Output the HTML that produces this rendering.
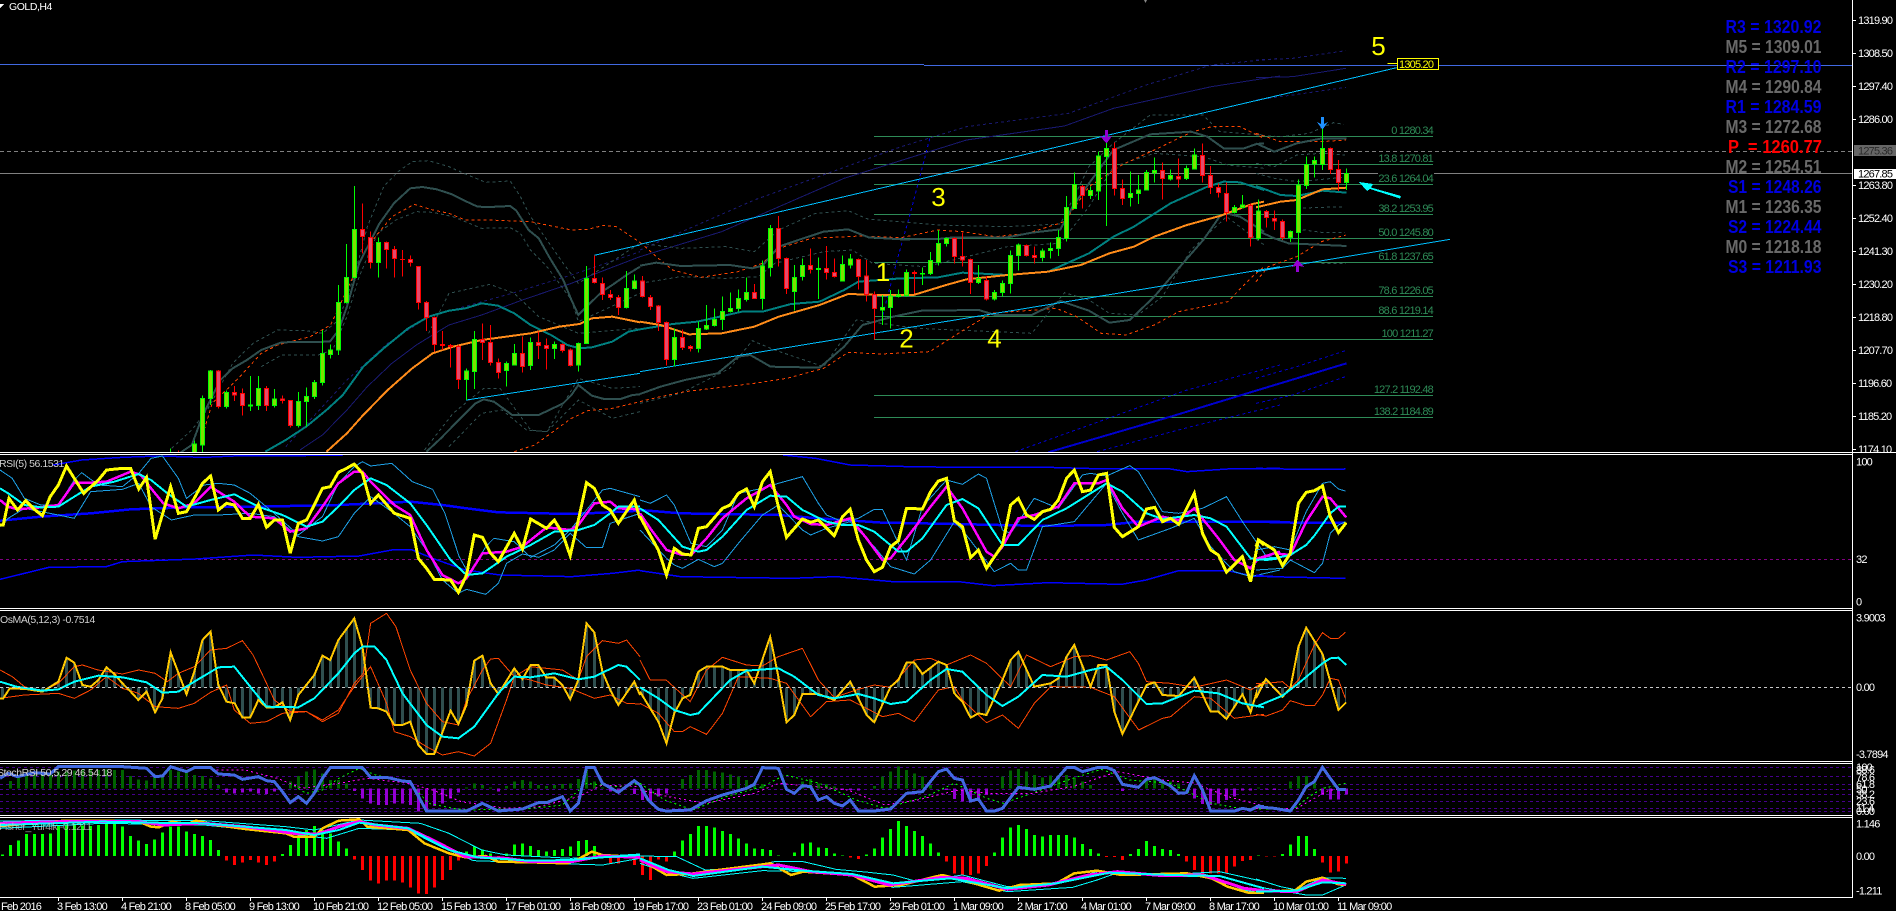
<!DOCTYPE html>
<html><head><meta charset="utf-8"><title>GOLD,H4</title>
<style>
html,body{margin:0;padding:0;background:#000;overflow:hidden}
svg{display:block;shape-rendering:crispEdges}
path,polyline{fill:none;vector-effect:non-scaling-stroke}
text{font-family:"Liberation Sans",sans-serif}
.ax{font-size:11px;letter-spacing:-.8px;fill:#fff}
.fb{font-size:11px;letter-spacing:-.8px;fill:#2e8b57;text-anchor:end}
.lb{font-size:10.5px;letter-spacing:-.45px;fill:#d0d0d0}
.num{font-size:26px;fill:#ff0;text-anchor:middle}
.pv{font-size:18px;font-weight:bold}
.gb{fill:#7ee000;stroke:#0f0;stroke-width:1}
.rb{fill:#e54a6c;stroke:#f00;stroke-width:1}
.gw{stroke:#0f0;stroke-width:1}
.rw{stroke:#f00;stroke-width:1}
.s{stroke:#2f4f4f;stroke-width:2}
.sd{stroke:#2f4f4f;stroke-width:1;stroke-dasharray:3 3}
.t{stroke:#008080;stroke-width:2}
.o{stroke:#ff8c1a;stroke-width:2}
.od{stroke:#ff4500;stroke-width:1;stroke-dasharray:3 3}
.m{stroke:#191970;stroke-width:1}
.md{stroke:#191970;stroke-width:1;stroke-dasharray:3 3}
.c{stroke:#00bfff;stroke-width:1}
.bb{stroke:#0000cd;stroke-width:2}
.bd{stroke:#0000cd;stroke-width:1;stroke-dasharray:3 3}
.y{stroke:#ff0;stroke-width:3}
.mg{stroke:#f0f;stroke-width:2.5}
.cy{stroke:#0ff;stroke-width:2}
.th{stroke:#1ea0e6;stroke-width:1}
.bl{stroke:#00f;stroke-width:2.5}
.bt{stroke:#00f;stroke-width:1.5}
.gd{stroke:#ffc800;stroke-width:2}
.or{stroke:#ff4500;stroke-width:1}
.hf{fill:url(#h);stroke:none}
.rb2{stroke:#4169e1;stroke-width:3}
.gs{stroke:#0f0;stroke-width:1;stroke-dasharray:2 3}
.ms{stroke:#f0f;stroke-width:1;stroke-dasharray:2 3}
.dg{stroke:#006400;stroke-width:3}
.pu{stroke:#9400d3;stroke-width:3}
.lg{stroke:#0f0;stroke-width:3}
.lr{stroke:#f00;stroke-width:3}
.cyt{stroke:#0ff;stroke-width:1}
.gd3{stroke:#ffc800;stroke-width:2.5}
.mg3{stroke:#f0f;stroke-width:3}
</style></head>
<body>
<svg xmlns="http://www.w3.org/2000/svg" width="1896" height="911" viewBox="0 0 1896 911">
<defs><pattern id="h" patternUnits="userSpaceOnUse" width="19.6" height="100"><rect x="2.45" width="7.35" height="100" fill="#2f4f4f"/></pattern></defs>
<rect width="1896" height="911" fill="#000"/>

<!-- horizontal lines -->
<g stroke-width="1">
<line x1="0" y1="64.5" x2="924" y2="64.5" stroke="#4169e1"/>
<line x1="924" y1="65.5" x2="1852" y2="65.5" stroke="#4169e1"/>
<line x1="0" y1="151.5" x2="1852" y2="151.5" stroke="#808080" stroke-dasharray="4 3"/>
<line x1="0" y1="173.5" x2="1378" y2="173.5" stroke="#808080"/>
<line x1="1434" y1="173.5" x2="1852" y2="173.5" stroke="#808080"/>
</g>
<g stroke="#2e8b57" stroke-width="1">
<line x1="874" y1="136.5" x2="1433" y2="136.5"/><line x1="874" y1="164.5" x2="1433" y2="164.5"/><line x1="874" y1="184.5" x2="1433" y2="184.5"/><line x1="874" y1="214.5" x2="1433" y2="214.5"/><line x1="874" y1="238.5" x2="1433" y2="238.5"/><line x1="874" y1="262.5" x2="1433" y2="262.5"/><line x1="874" y1="296.5" x2="1433" y2="296.5"/><line x1="874" y1="316.5" x2="1433" y2="316.5"/><line x1="874" y1="339.5" x2="1433" y2="339.5"/><line x1="874" y1="395.5" x2="1433" y2="395.5"/><line x1="874" y1="417.5" x2="1433" y2="417.5"/>
</g>

<!-- main overlays: zoom 1 -->
<g transform="scale(.40816 .33333)">
<polyline class="md" points="700,1340 850,1140 950,1030 1050,950 1260,878 1400,825 1568,755"/>
<polyline class="m" points="735,1350 790,1305 850,1230 900,1160 960,1090 1020,1035 1100,975 1180,945 1280,900 1400,850 1440,830 1568,770"/>
<polyline class="sd" points="420,1345 470,1290 510,1225 570,1090 620,1030 680,990 750,992 790,1000 830,960 870,820 900,680 940,560 975,515 1010,485 1050,482 1100,500 1140,522 1190,547 1250,543 1275,590 1300,650 1340,720 1380,790 1417,850 1568,730"/>
<polyline class="sd" points="640,1100 690,1065 780,1065 815,1050 850,950 880,830 925,700 970,660 1020,635 1060,637 1110,650 1180,685 1250,683 1275,700 1300,750 1340,800 1400,900 1417,965 1568,880"/>
<polyline class="sd" points="1050,1000 1100,880 1200,853 1260,880 1320,950 1417,1000 1568,985"/>
<polyline class="sd" points="1040,1350 1110,1240 1185,1165 1225,1165 1300,1290 1340,1295 1417,1135 1500,1165 1568,1160"/>
<polyline class="sd" points="1100,1340 1180,1240 1230,1230 1290,1290 1340,1295 1417,1200 1500,1255 1568,1235"/>
<polyline class="od" points="500,1290 520,1210 580,1140 640,1060 680,1035 760,1010 810,975 850,870 900,740 960,650 1015,613 1060,630 1100,640 1140,660 1200,660 1300,665 1400,690 1440,688 1480,676 1510,680 1568,727"/>
<polyline class="od" points="1260,1355 1310,1335 1400,1255 1440,1232 1500,1225 1568,1205"/>
<polyline class="s" points="443,1357 470,1335 497,1245 540,1140 570,1105 605,1080 640,1050 690,1027 808,1025 830,990 850,920 880,790 905,730 930,670 965,610 1005,565 1035,561 1070,568 1105,582 1140,603 1170,620 1200,621 1250,618 1265,632 1295,690 1320,715 1345,770 1380,840 1400,900 1417,945 1437,920 1475,875 1500,855 1535,825 1568,800"/>
<polyline class="s" points="1045,1355 1080,1315 1120,1265 1165,1210 1185,1198 1210,1205 1255,1245 1320,1245 1380,1210 1400,1185 1417,1155 1450,1187 1480,1197 1520,1197 1550,1185 1568,1183"/>
<polyline class="t" points="650,1355 700,1320 750,1280 800,1230 840,1185 890,1100 940,1045 1000,985 1050,950 1100,932 1140,925 1180,910 1220,917 1260,940 1300,975 1350,1005 1390,1035 1420,1045 1450,1042 1500,1025 1540,995 1568,988"/>
<polyline class="o" points="800,1355 850,1300 890,1245 950,1170 1010,1105 1060,1060 1110,1040 1180,1020 1300,1000 1370,980 1420,972 1450,955 1500,950 1540,960 1568,967"/>
<polyline class="c" points="1456,766 1568,735"/>
<polyline class="c" points="1143,1120 1143,1200 1568,1120"/>
</g>
<!-- main overlays: zoom 2 -->
<g transform="translate(640 0) scale(.40816 .33333)">
<polyline points="710,415 690,510 660,650 630,780 600,920 590,970" stroke="#0000e0" stroke-width="1" style="stroke-dasharray:3 3"/>
<polyline class="md" points="0,750 280,600 640,440 800,380 1050,340 1240,255 1400,195 1568,175"/>
<polyline class="m" points="0,770 200,695 500,535 800,420 1040,378 1160,325 1400,260 1568,228"/>
<polyline class="bd" points="920,1355 1340,1170 1568,1095"/>
<polyline class="bd" points="1120,1355 1350,1280 1568,1215"/>
<polyline class="bb" points="1000,1357 1300,1250 1568,1150"/>
<polyline class="sd" points="0,730 100,745 210,740 280,755 340,690 430,640 510,632 560,658 640,665 730,675 900,680 1030,672 1100,500 1160,430 1250,345 1380,345 1420,395 1529,405"/>
<polyline class="sd" points="0,1210 100,1180 220,1105 275,1022 330,1050 450,1100 530,960 680,985 960,1000 1040,878 1100,900 1150,940 1220,945 1280,890 1350,750 1437,650 1529,735"/>
<polyline class="sd" points="0,850 100,830 210,835 290,830 330,790 450,755 520,750 570,790 700,800 900,740 1030,730 1100,620 1160,500 1260,460 1380,470 1440,495 1529,505"/>
<polyline class="od" points="0,727 40,770 80,810 150,832 240,815 300,790 340,745 420,715 540,708 640,713 730,690 790,695 870,710 950,700 1040,665 1100,560 1180,495 1260,450 1350,397 1400,380 1470,380 1529,415"/>
<polyline class="od" points="0,1205 50,1190 110,1175 280,1150 360,1135 450,1105 510,1057 590,1062 710,1055 780,1000 860,940 1020,925 1070,950 1130,1000 1190,1005 1260,975 1320,935 1440,905 1500,830 1529,800"/>
<polyline class="s" points="0,797 40,788 100,798 220,795 275,805 300,797 340,740 400,715 450,695 510,688 560,712 640,718 730,717 770,712 900,712 960,698 1030,688 1060,620 1100,550 1160,450 1250,403 1350,395 1390,410 1430,445 1480,445 1510,432 1529,430"/>
<polyline class="s" points="0,1182 50,1160 110,1140 190,1120 240,1070 270,1065 320,1100 440,1103 500,1040 545,975 620,950 690,932 830,930 870,945 960,945 1030,903 1100,932 1150,968 1200,960 1260,890 1330,790 1380,720 1420,650 1437,640 1470,650 1529,695"/>
<polyline class="t" points="0,988 80,972 140,965 250,935 300,935 370,912 440,905 500,870 535,845 640,835 730,832 790,818 900,825 1000,815 1100,760 1160,710 1210,680 1300,610 1390,560 1430,545 1470,547 1529,570"/>
<polyline class="o" points="0,965 50,975 120,1003 200,1000 280,980 340,950 440,915 510,882 590,885 670,885 750,855 800,838 900,825 1000,815 1080,795 1150,760 1210,740 1260,710 1340,675 1420,648 1500,612 1529,605"/>
<polyline class="c" points="0,733 1568,285"/>
<polyline class="c" points="0,1115 1568,800"/>
</g>
<!-- main overlays: zoom 3 -->
<g transform="translate(1256 0) scale(.40816 .33333)">
<polyline class="md" points="0,180 90,175 220,152"/>
<polyline class="m" points="0,233 90,230 220,205"/>
<polyline class="md" points="0,300 90,285 220,262"/>
<polyline class="bd" points="0,1135 100,1100 219,1052"/>
<polyline class="bd" points="0,1210 90,1185 219,1130"/>
<polyline class="bb" points="0,1172 100,1135 222,1090"/>
<polyline class="sd" points="0,405 60,410 130,400 190,368 215,373"/>
<polyline class="sd" points="0,490 45,500 100,465 160,460 218,465"/>
<polyline class="sd" points="0,520 45,535 100,545 215,532"/>
<polyline class="sd" points="100,625 160,622 218,620"/>
<polyline class="sd" points="100,687 160,697 218,697"/>
<polyline class="sd" points="160,790 220,790"/>
<polyline class="od" points="0,400 60,425 160,425 220,420"/>
<polyline class="od" points="0,845 30,800 100,770 160,725 220,705"/>
<polyline class="s" points="0,430 45,455 100,430 162,415 222,415"/>
<polyline class="s" points="0,690 45,715 80,730 222,738"/>
<polyline class="t" points="0,558 60,585 100,588 163,572 222,578"/>
<polyline class="o" points="0,622 60,605 100,600 163,568 222,563"/>
<polyline class="c" points="0,302 345,203"/>
<polyline class="c" points="0,815 475,718"/>
<polyline points="322,190 346,190" stroke="#ff0" stroke-width="1"/>
</g>

<!-- candles -->
<g transform="translate(2.5 0) scale(8 .33333)">
<path class="gw" d="M21 1345V1357M24 1322V1357M25 1186V1357M26 1110V1215M28 1172V1225M31 1128V1233M32 1128V1230M34 1167V1223M37 1176V1283M38 1162V1280M39 1140V1197M40 990V1157M41 1033V1076M42 855V1065M43 732V910M44 558V835M47 712V833M58 1105V1200M59 993V1167M63 1085V1160M64 1032V1097M66 1012V1110M69 1025V1077M72 1027V1115M73 798V1030M78 813V925M79 823V868M84 985V1100M87 965V1058M88 915V990M89 925V980M90 890V990M91 877V937M92 868V935M93 832V905M95 782V928M96 675V830M99 795V932M100 775V842M102 772V897M105 767V845M106 762V805M110 885V975M111 870V985M112 868V893M113 808V890M115 802V855M116 756V825M117 690V797M118 712V740M122 795V852M124 870V902M125 842V890M126 752V880M127 730V812M130 745V785M131 727V775M132 690V768M133 588V725M134 517V627M136 560V597M137 455V600M138 420V678M141 515V620M142 525V612M143 510V572M144 472V548M146 508V542M148 497V540M149 445V508M154 615V640M155 585V625M157 598V720M161 692V726M162 538V790M163 470V567M164 470V533M165 385V510M168 505V570"/>
<path class="rw" d="M22 1352V1357M27 1110V1225M29 1158V1203M30 1165V1247M33 1158V1233M35 1186V1210M36 1200V1283M45 610V760M46 694V806M48 725V806M49 738V833M50 750V830M51 766V800M52 798V928M53 903V993M54 950V1055M55 993V1050M56 1032V1103M57 1035V1167M60 970V1080M61 975V1097M62 1075V1136M65 1010V1118M67 995V1077M68 1015V1108M70 1030V1058M71 1045V1100M74 766V850M75 832V900M76 870V900M77 885V945M80 828V893M81 885V930M82 915V993M83 965V1097M85 988V1050M86 1035V1055M94 852V897M97 648V800M98 772V882M101 745V820M103 738V838M104 775V832M107 775V868M108 780V905M109 875V1018M114 812V880M119 712V790M120 697V800M121 775V882M123 828V902M128 733V770M129 740V790M135 555V625M139 428V587M140 538V615M145 488V598M147 475V562M150 430V548M151 498V582M152 550V592M153 548V665M156 610V740M158 630V682M159 632V690M160 658V720M166 442V522M167 480V573"/>
<path class="gb" d="M23.75 1332h.5V1357h-.5zM24.75 1195h.5V1335h-.5zM25.75 1113h.5V1195h-.5zM27.75 1177h.5V1220h-.5zM30.75 1215h.5V1218h-.5zM31.75 1165h.5V1217h-.5zM33.75 1197h.5V1217h-.5zM36.75 1204h.5V1277h-.5zM37.75 1190h.5V1205h-.5zM38.75 1147h.5V1190h-.5zM39.75 1060h.5V1148h-.5zM40.75 1050h.5V1063h-.5zM41.75 907h.5V1050h-.5zM42.75 832h.5V907h-.5zM43.75 688h.5V832h-.5zM46.75 727h.5V787h-.5zM57.75 1113h.5V1138h-.5zM58.75 1018h.5V1115h-.5zM62.75 1090h.5V1112h-.5zM63.75 1060h.5V1095h-.5zM65.75 1027h.5V1097h-.5zM68.75 1033h.5V1045h-.5zM71.75 1030h.5V1095h-.5zM72.75 835h.5V1030h-.5zM77.75 865h.5V923h-.5zM78.75 843h.5V866h-.5zM83.75 1012h.5V1078h-.5zM86.75 985h.5V1045h-.5zM87.75 977h.5V987h-.5zM88.75 958h.5V977h-.5zM89.75 935h.5V958h-.5zM90.75 925h.5V935h-.5zM91.75 895h.5V925h-.5zM92.75 877h.5V898h-.5zM94.75 798h.5V895h-.5zM95.75 685h.5V802h-.5zM98.75 832h.5V875h-.5zM99.75 796h.5V830h-.5zM101.75 805h.5V808h-.5zM104.75 793h.5V843h-.5zM105.75 777h.5V795h-.5zM109.75 922h.5V930h-.5zM110.75 888h.5V922h-.5zM111.75 885h.5V890h-.5zM112.75 817h.5V887h-.5zM114.75 820h.5V822h-.5zM115.75 781h.5V820h-.5zM116.75 730h.5V787h-.5zM117.75 715h.5V730h-.5zM121.75 835h.5V848h-.5zM123.75 877h.5V897h-.5zM124.75 850h.5V877h-.5zM125.75 766h.5V851h-.5zM126.75 735h.5V767h-.5zM129.75 753h.5V773h-.5zM130.75 745h.5V752h-.5zM131.75 713h.5V745h-.5zM132.75 622h.5V715h-.5zM133.75 553h.5V625h-.5zM135.75 571h.5V587h-.5zM136.75 468h.5V573h-.5zM137.75 445h.5V470h-.5zM140.75 580h.5V593h-.5zM141.75 570h.5V580h-.5zM142.75 517h.5V570h-.5zM143.75 511h.5V519h-.5zM145.75 526h.5V537h-.5zM147.75 505h.5V535h-.5zM148.75 465h.5V507h-.5zM153.75 622h.5V638h-.5zM154.75 615h.5V623h-.5zM156.75 633h.5V715h-.5zM160.75 695h.5V713h-.5zM161.75 555h.5V697h-.5zM162.75 493h.5V557h-.5zM163.75 481h.5V492h-.5zM164.75 445h.5V493h-.5zM167.75 520h.5V548h-.5z"/>
<path class="rb" d="M26.75 1113h.5V1220h-.5zM28.75 1177h.5V1185h-.5zM29.75 1180h.5V1217h-.5zM32.75 1165h.5V1217h-.5zM34.75 1197h.5V1201h-.5zM35.75 1201h.5V1277h-.5zM44.75 688h.5V710h-.5zM45.75 712h.5V787h-.5zM47.75 727h.5V748h-.5zM48.75 748h.5V775h-.5zM49.75 778h.5V779h-.5zM50.75 778h.5V787h-.5zM51.75 800h.5V907h-.5zM52.75 907h.5V952h-.5zM53.75 952h.5V1033h-.5zM54.75 1033h.5V1037h-.5zM55.75 1037h.5V1040h-.5zM56.75 1040h.5V1138h-.5zM59.75 1018h.5V1027h-.5zM60.75 1027h.5V1087h-.5zM61.75 1087h.5V1117h-.5zM64.75 1060h.5V1100h-.5zM66.75 1027h.5V1037h-.5zM67.75 1037h.5V1045h-.5zM69.75 1033h.5V1052h-.5zM70.75 1050h.5V1097h-.5zM73.75 835h.5V848h-.5zM74.75 851h.5V883h-.5zM75.75 883h.5V893h-.5zM76.75 892h.5V922h-.5zM79.75 843h.5V890h-.5zM80.75 892h.5V920h-.5zM81.75 918h.5V968h-.5zM82.75 968h.5V1078h-.5zM84.75 1012h.5V1042h-.5zM85.75 1040h.5V1046h-.5zM93.75 877h.5V895h-.5zM96.75 685h.5V775h-.5zM97.75 775h.5V865h-.5zM100.75 796h.5V808h-.5zM102.75 805h.5V817h-.5zM103.75 817h.5V830h-.5zM106.75 778h.5V830h-.5zM107.75 828h.5V883h-.5zM108.75 883h.5V925h-.5zM113.75 817h.5V820h-.5zM118.75 715h.5V770h-.5zM119.75 770h.5V780h-.5zM120.75 778h.5V848h-.5zM122.75 841h.5V897h-.5zM127.75 737h.5V767h-.5zM128.75 767h.5V773h-.5zM134.75 560h.5V587h-.5zM138.75 445h.5V565h-.5zM139.75 565h.5V595h-.5zM144.75 512h.5V535h-.5zM146.75 530h.5V537h-.5zM149.75 466h.5V526h-.5zM150.75 526h.5V562h-.5zM151.75 562h.5V578h-.5zM152.75 580h.5V637h-.5zM155.75 617h.5V712h-.5zM157.75 635h.5V652h-.5zM158.75 655h.5V663h-.5zM159.75 665h.5V712h-.5zM165.75 445h.5V508h-.5zM166.75 508h.5V547h-.5z"/>
</g>

<!-- arrows -->
<polygon points="1321,117 1324,117 1324,124 1328,122 1323,129 1322,129 1317,122 1321,124" fill="#1e90ff"/>
<polygon points="1105,130 1108,130 1108,137 1112,136 1107,143 1106,143 1100,136 1105,137" fill="#9400d3"/>
<polygon points="1296,272 1299,272 1299,266 1304,267 1298,260 1297,260 1292,267 1296,266" fill="#9400d3"/>
<polygon points="1359,182 1373,184 1371,187.5 1401,196 1400,198.5 1370,189 1367,191" fill="#0ff"/>
<polygon points="1144,0 1147,0 1145.5,3" fill="#888"/>

<!-- RSI panel -->
<line x1="0" y1="559.5" x2="1852" y2="559.5" stroke="#800080" stroke-dasharray="3 3"/>
<g transform="translate(0 450) scale(.40816 .33333)">
<polyline class="bt" points="130,45 200,30 300,22 390,18 500,22 590,17 720,17 840,15"/>
<polyline class="bt" points="0,388 60,370 120,352 260,350 300,335 480,327 620,315 730,322 880,318 960,300 1010,300 1060,325 1140,360 1225,375 1400,380 1500,370 1568,360"/>
<polyline class="bl" points="0,212 100,200 222,190 320,178 457,172 633,170 829,165 1005,155 1084,165 1143,175 1221,187 1397,192 1476,188 1568,182"/>
<polyline class="th" points="0,60 30,85 60,145 100,165 143,165 182,90 200,68 241,105 300,110 340,70 370,25 398,18 437,85 457,145 500,105 535,100 574,105 613,130 672,190 731,255 790,200 829,100 868,50 888,35 908,48 960,40 1010,95 1060,118 1090,190 1125,320 1150,375 1190,290 1210,265 1260,275 1300,322 1358,285 1397,240 1437,180 1476,120 1495,115 1568,140"/>
<polyline class="th" points="0,230 20,205 60,175 143,195 182,205 222,125 300,118 340,100 370,170 420,210 476,195 535,195 613,190 672,200 731,260 790,273 829,260 868,190 908,140 960,185 1005,230 1050,310 1084,390 1123,430 1143,418 1190,433 1221,400 1241,340 1280,312 1320,322 1358,300 1397,250 1437,293 1476,293 1495,220 1568,190"/>
<polyline class="mg" points="0,150 20,170 43,178 100,172 143,165 182,98 222,98 261,95 320,65 345,75 370,115 400,160 437,175 476,160 516,110 535,125 574,155 613,200 672,205 711,245 751,235 790,170 829,100 868,65 888,65 908,95 966,165 1005,195 1045,300 1084,375 1123,400 1143,385 1182,310 1241,305 1280,290 1339,232 1397,240 1417,225 1456,160 1495,155 1515,175 1568,178"/>
<polyline class="cy" points="0,115 20,130 60,165 100,172 143,170 182,140 222,110 280,95 340,72 370,90 410,130 457,170 516,150 574,133 633,170 692,195 751,230 790,215 829,170 868,120 908,85 947,105 1005,160 1045,225 1104,330 1143,375 1182,370 1241,320 1300,285 1358,245 1417,240 1456,225 1495,190 1515,170 1568,170"/>
<polyline class="y" points="0,225 8,225 22,145 43,180 63,152 84,178 104,197 123,140 143,105 163,48 182,85 205,130 241,90 261,60 300,55 320,55 340,117 359,82 380,268 418,110 437,190 457,185 476,145 496,100 516,78 535,180 555,160 574,165 594,205 613,205 633,163 653,232 672,210 692,210 711,310 731,220 751,210 770,165 790,115 809,110 829,67 849,55 868,42 888,70 908,160 927,135 966,190 1005,205 1025,325 1045,355 1064,388 1104,390 1123,427 1143,375 1162,255 1182,262 1202,310 1221,335 1260,250 1280,297 1300,207 1339,235 1358,210 1378,250 1397,317 1417,210 1437,98 1456,115 1476,165 1495,180 1515,220 1554,150 1568,205"/>
</g>
<g transform="translate(640 450) scale(.40816 .33333)">
<polyline class="bt" points="350,15 430,25 515,45 660,50 790,52 1000,52 1143,57 1300,57 1340,65 1440,57 1568,55"/>
<polyline class="bt" points="0,362 100,380 370,385 480,380 620,395 780,395 865,407 1000,398 1180,403 1240,390 1320,362 1440,362 1500,378 1568,380"/>
<polyline class="bl" points="0,180 100,190 339,195 437,205 594,218 770,222 986,228 1143,225 1221,215 1568,215"/>
<polyline class="th" points="0,150 25,160 65,135 84,165 125,280 163,290 202,240 241,130 300,115 339,100 398,80 437,160 457,195 496,215 535,205 574,178 594,178 633,280 653,330 692,170 751,90 790,103 829,72 849,85 888,240 908,250 966,145 1025,175 1084,75 1104,70 1143,78 1200,47 1221,65 1280,185 1320,190 1378,175 1437,140 1476,215 1535,320 1568,325"/>
<polyline class="th" points="0,240 65,325 84,345 104,355 143,328 182,350 202,340 241,280 300,195 339,165 398,240 418,255 457,235 515,215 574,290 614,350 672,372 712,330 770,215 790,240 868,365 908,340 927,360 947,360 986,230 1064,215 1143,100 1182,190 1221,270 1300,235 1358,205 1398,290 1456,365 1496,380 1568,360"/>
<polyline class="mg" points="0,190 25,235 65,300 104,315 125,315 163,265 202,205 261,145 319,105 359,165 378,200 418,222 457,225 515,205 555,265 594,330 614,325 653,265 712,170 751,110 790,175 849,305 868,320 888,290 927,205 966,195 1025,170 1064,100 1123,100 1143,90 1182,175 1221,230 1280,200 1320,210 1358,175 1417,265 1456,330 1496,355 1515,325 1568,305"/>
<polyline class="cy" points="0,175 45,210 104,290 143,305 163,300 202,260 261,180 319,137 359,140 398,180 457,215 496,225 535,225 574,245 633,305 653,305 692,265 751,165 790,147 829,175 888,285 927,285 986,210 1045,175 1104,130 1143,100 1182,125 1241,190 1280,207 1358,195 1398,205 1437,230 1496,325 1535,330 1568,325"/>
<polyline class="y" points="0,200 45,300 65,375 84,295 104,312 125,315 143,235 163,230 202,175 221,165 241,130 261,117 280,170 300,95 319,65 339,170 359,262 398,207 418,217 437,210 476,257 496,200 515,178 535,270 555,330 574,365 594,352 614,290 633,272 653,175 692,177 712,125 731,93 751,85 770,212 790,230 810,323 829,300 849,355 888,285 908,165 927,145 947,195 966,208 986,185 1006,178 1025,150 1045,85 1064,60 1084,125 1104,120 1123,75 1143,70 1162,232 1182,260 1221,230 1241,177 1261,172 1280,215 1300,205 1320,223 1358,130 1378,250 1398,300 1417,315 1437,367 1476,320 1496,395 1515,270 1529,285"/>
</g>
<g transform="translate(1256 450) scale(.40816 .33333)">
<polyline class="bt" points="0,55 100,58 219,57"/>
<polyline class="bt" points="0,375 30,380 219,385"/>
<polyline class="bl" points="0,215 100,218 219,218"/>
<polyline class="th" points="0,300 45,290 84,300 123,185 163,100 182,95 202,117 219,123"/>
<polyline class="th" points="0,360 65,355 84,330 143,368 163,340 182,250 202,225 219,215"/>
<polyline class="mg" points="0,330 45,310 84,315 123,215 163,140 182,145 221,202"/>
<polyline class="cy" points="0,330 45,325 84,315 123,285 143,257 182,190 202,170 221,170"/>
<polyline class="y" points="0,290 6,270 45,300 65,347 84,310 104,160 123,127 143,122 163,108 182,200 202,248 221,218"/>
</g>

<!-- OsMA panel -->
<g transform="translate(0 450) scale(.40816 .33333)">
<path class="hf" d="M0 712L0 745 8 745 24 715 64 717 104 725 143 695 163 623 182 638 202 705 222 710 241 690 261 652 280 672 300 700 320 725 339 750 359 725 380 787 398 745 418 607 457 733 476 665 496 570 516 545 535 705 555 755 575 760 594 803 613 803 633 750 653 772 672 772 692 757 711 810 731 735 770 675 790 617 809 630 829 570 868 505 888 590 908 773 927 775 947 785 966 825 986 825 1005 815 1025 885 1045 912 1064 912 1104 782 1123 822 1143 765 1162 632 1182 617 1202 700 1221 732 1260 655 1280 687 1300 645 1319 645 1339 683 1358 683 1378 705 1397 748 1417 690 1437 520 1456 547 1476 665 1495 720 1515 765 1554 695 1568 735 1568 712Z"/>
<polyline class="or" points="0,660 30,680 60,710 100,725 143,700 182,650 202,645 240,660 300,672 340,660 380,670 410,695 437,670 476,650 516,600 555,595 594,572 620,615 653,700 672,750 711,785 751,785 790,815 829,790 868,700 890,670 908,520 947,490 970,530 1005,660 1045,760 1084,815 1123,825 1143,750 1182,660 1202,627 1221,625 1260,680 1300,650 1339,655 1378,660 1417,690 1437,620 1476,572 1515,580 1535,570 1568,620"/>
<polyline class="or" points="0,745 60,735 143,730 182,745 222,720 261,680 300,715 339,730 380,770 437,775 476,760 516,727 555,705 574,780 613,820 653,815 692,790 751,785 790,810 829,780 868,710 908,650 947,760 966,845 1005,860 1045,890 1084,915 1123,905 1162,918 1202,880 1241,750 1260,680 1300,690 1339,705 1397,715 1456,745 1495,735 1535,760 1568,762"/>
<polyline class="gd" points="0,745 8,745 24,715 64,717 104,725 143,695 163,623 182,638 202,705 222,710 241,690 261,652 280,672 300,700 320,725 339,750 359,725 380,787 398,745 418,607 457,733 476,665 496,570 516,545 535,705 555,755 575,760 594,803 613,803 633,750 653,772 672,772 692,757 711,810 731,735 770,675 790,617 809,630 829,570 868,505 888,590 908,773 927,775 947,785 966,825 986,825 1005,815 1025,885 1045,912 1064,912 1104,782 1123,822 1143,765 1162,632 1182,617 1202,700 1221,732 1260,655 1280,687 1300,645 1319,645 1339,683 1358,683 1378,705 1397,748 1417,690 1437,520 1456,547 1476,665 1495,720 1515,765 1554,695 1568,735"/>
<polyline class="cy" points="0,695 40,710 104,722 143,718 182,695 241,677 300,682 359,697 398,728 437,725 476,695 535,652 574,650 613,710 653,770 731,772 770,745 829,670 868,610 888,590 918,590 947,630 986,730 1045,825 1084,860 1123,865 1162,830 1221,730 1260,680 1300,682 1358,670 1417,688 1456,680 1515,645 1535,650 1568,690"/>
</g>
<g transform="translate(640 450) scale(.40816 .33333)">
<path class="hf" d="M0 712L0 725 45 815 65 880 84 790 104 745 123 735 143 665 163 650 202 650 221 660 261 660 280 700 319 560 339 680 359 817 378 795 398 732 437 732 476 750 515 695 555 795 574 817 614 710 633 690 653 638 672 638 692 672 731 635 751 645 770 730 790 755 810 803 829 790 849 795 888 690 908 630 927 605 966 710 1006 700 1025 685 1045 620 1064 585 1104 710 1123 645 1143 645 1162 785 1182 852 1241 705 1261 697 1280 735 1320 738 1358 683 1398 785 1417 785 1437 807 1476 733 1496 787 1515 710 1529 695 1529 712Z"/>
<polyline class="or" points="0,630 25,690 64,690 123,755 163,660 202,622 261,645 300,648 339,620 398,595 437,690 476,742 535,718 574,705 614,712 672,630 712,625 751,645 810,615 849,640 908,710 947,615 1006,650 1064,620 1104,617 1143,630 1200,605 1221,640 1241,695 1300,700 1358,712 1437,690 1496,720 1529,695"/>
<polyline class="or" points="0,760 45,790 84,845 104,845 123,830 163,853 202,790 241,680 319,685 359,700 418,800 457,755 515,750 555,775 594,800 633,790 672,815 731,720 770,710 790,750 849,818 888,795 927,835 966,760 1006,710 1104,712 1162,740 1222,840 1280,805 1300,800 1358,740 1398,745 1456,805 1529,793"/>
<polyline class="gd" points="0,725 45,815 65,880 84,790 104,745 123,735 143,665 163,650 202,650 221,660 261,660 280,700 319,560 339,680 359,817 378,795 398,732 437,732 476,750 515,695 555,795 574,817 614,710 633,690 653,638 672,638 692,672 731,635 751,645 770,730 790,755 810,803 829,790 849,795 888,690 908,630 927,605 966,710 1006,700 1025,685 1045,620 1064,585 1104,710 1123,645 1143,645 1162,785 1182,852 1241,705 1261,697 1280,735 1320,738 1358,683 1398,785 1417,785 1437,807 1476,733 1496,787 1515,710 1529,695"/>
<polyline class="cy" points="0,712 45,745 84,780 123,795 143,790 182,740 221,690 261,662 339,655 378,680 437,735 476,745 535,732 574,745 614,762 653,755 712,690 751,657 790,665 849,735 888,768 927,740 986,675 1045,680 1104,660 1143,650 1182,690 1241,762 1280,760 1358,722 1417,730 1476,760 1529,772"/>
</g>
<g transform="translate(1256 450) scale(.40816 .33333)">
<path class="hf" d="M0 712L0 745 24 687 65 740 84 715 104 590 123 533 163 612 202 780 221 757 221 712Z"/>
<polyline class="or" points="0,700 25,700 65,695 84,715 104,690 143,585 163,548 182,565 202,565 219,547"/>
<polyline class="or" points="0,793 25,798 65,780 84,752 123,767 143,767 163,735 182,685 202,690 219,745"/>
<polyline class="gd" points="0,745 24,687 65,740 84,715 104,590 123,533 163,612 202,780 221,757"/>
<polyline class="cy" points="0,770 65,737 104,700 163,640 182,625 202,623 221,645"/>
</g>
<line x1="0" y1="687.5" x2="1852" y2="687.5" stroke="#c8c8c8" stroke-dasharray="3 3"/>

<!-- Stoch panel -->
<g stroke="#46008c" stroke-dasharray="3 3">
<line x1="0" y1="767.5" x2="1852" y2="767.5"/><line x1="0" y1="776.5" x2="1852" y2="776.5"/><line x1="0" y1="784.5" x2="1852" y2="784.5"/><line x1="0" y1="789.5" x2="1852" y2="789.5"/><line x1="0" y1="794.5" x2="1852" y2="794.5"/><line x1="0" y1="801.5" x2="1852" y2="801.5"/><line x1="0" y1="808.5" x2="1852" y2="808.5"/><line x1="0" y1="811.5" x2="1852" y2="811.5"/>
</g>
<g transform="translate(2.5 450) scale(8 .33333)">
<path class="dg" d="M1 1015V993M2 1015V980M3 1015V978M4 1015V975M5 1015V975M6 1015V975M7 1015V965M8 1015V965M9 1015V962M10 1015V960M11 1015V958M12 1015V960M13 1015V958M14 1015V960M15 1015V960M16 1015V978M17 1015V988M18 1015V992M19 1015V975M20 1015V978M21 1015V960M22 1015V965M23 1015V965M24 1015V975M25 1015V978M26 1015V985M27 1015V1005M36 1015V995M37 1015V978M38 1015V965M39 1015V958M40 1015V970M41 1015V990M42 1015V990M43 1015V1000M58 1015V1012M59 1015V1000M60 1015V1005M61 1015V1012M63 1015V1008M64 1015V995M65 1015V990M66 1015V995M67 1015V1005M68 1015V1008M69 1015V1005M70 1015V1002M71 1015V1000M72 1015V987M73 1015V960M74 1015V995M75 1015V1012M85 1015V987M86 1015V975M87 1015V960M88 1015V960M89 1015V965M90 1015V968M91 1015V973M92 1015V980M93 1015V990M94 1015V998M95 1015V1002M100 1015V995M101 1015V987M102 1015V1000M103 1015V1002M104 1015V1010M109 1015V1008M110 1015V980M111 1015V965M112 1015V950M113 1015V960M114 1015V970M115 1015V980M116 1015V1005M125 1015V980M126 1015V962M127 1015V957M128 1015V965M129 1015V975M130 1015V982M131 1015V977M132 1015V975M133 1015V975M134 1015V982M135 1015V995M136 1015V1005M143 1015V990M144 1015V985M145 1015V990M146 1015V995M147 1015V1000M157 1015V1013M161 1015V995M162 1015V978M163 1015V978M164 1015V997"/>
<path class="pu" d="M28 1015V1027M29 1015V1030M30 1015V1028M31 1015V1025M32 1015V1030M33 1015V1032M34 1015V1025M44 1015V1023M45 1015V1045M46 1015V1060M47 1015V1065M48 1015V1065M49 1015V1060M50 1015V1060M51 1015V1065M52 1015V1085M53 1015V1085M54 1015V1068M55 1015V1060M56 1015V1045M57 1015V1027M62 1015V1025M76 1015V1025M77 1015V1030M79 1015V1032M80 1015V1050M81 1015V1058M82 1015V1040M83 1015V1030M105 1015V1020M106 1015V1020M107 1015V1022M118 1015V1020M119 1015V1047M120 1015V1055M121 1015V1058M122 1015V1045M123 1015V1035M140 1015V1023M149 1015V1045M150 1015V1062M151 1015V1065M152 1015V1060M153 1015V1050M154 1015V1040M155 1015V1022M156 1015V1022M158 1015V1018M159 1015V1020M165 1015V1035M166 1015V1048M167 1015V1048M168 1015V1033"/>
</g>
<g transform="translate(0 450) scale(.40816 .33333)">
<polyline class="gs" points="710,1000 750,1030 790,1020 830,985 880,955 920,975 1000,995 1020,1020 1050,1060 1110,1075 1150,1080 1300,1075 1378,1065 1437,1000 1515,1010 1568,1000"/>
<polyline class="ms" points="530,960 600,960 680,985 740,1015 830,1000 900,985 1000,1000 1060,1020 1130,1055 1240,1075 1320,1070 1417,1040 1476,1005 1568,1010"/>
<polyline class="rb2" points="0,985 20,970 43,980 84,968 123,972 143,950 300,950 359,955 380,980 398,978 418,950 457,965 476,953 516,953 535,972 574,975 594,988 633,980 653,992 672,995 692,1025 711,1058 731,1040 751,1060 770,1030 790,985 809,953 888,953 908,982 947,982 986,993 1005,995 1045,1083 1143,1083 1182,1060 1221,1083 1280,1077 1319,1058 1339,1058 1378,1040 1397,1083 1417,1060 1437,952 1456,952 1476,1000 1515,1027 1554,992 1568,1005"/>
</g>
<g transform="translate(640 450) scale(.40816 .33333)">
<polyline class="gs" points="0,1000 60,1050 130,1080 210,1040 300,1010 355,975 440,1000 530,1050 600,1075 700,1040 770,1000 850,1045 890,1060 960,1030 1060,985 1130,958 1200,990 1300,1000 1400,1060 1470,1075 1529,1078"/>
<polyline class="ms" points="0,1020 70,1040 160,1060 280,1030 340,1000 430,1010 510,1020 600,1065 680,1050 780,1020 860,1030 960,1030 1060,1010 1170,965 1280,990 1360,1000 1440,1040 1529,1068"/>
<polyline class="rb2" points="0,1005 20,1050 45,1078 64,1083 123,1080 163,1052 202,1035 261,1015 280,1003 300,953 339,955 359,1018 378,1030 398,1007 418,1010 437,1050 457,1040 476,1060 496,1068 515,1050 535,1083 574,1083 614,1077 653,1030 692,1025 731,965 751,957 770,985 790,990 810,1053 829,1047 849,1083 868,1083 888,1075 927,1012 966,1018 1006,1008 1045,953 1064,952 1084,965 1123,952 1143,952 1162,962 1182,1003 1221,1012 1241,988 1261,983 1300,1008 1320,1030 1339,1028 1358,977 1378,1020 1398,1083 1456,1083 1476,1075 1496,1080 1515,1068 1529,1070"/>
</g>
<g transform="translate(1256 450) scale(.40816 .33333)">
<polyline class="gs" points="0,1075 90,1080 130,1040 163,1015 220,1000"/>
<polyline class="ms" points="0,1075 100,1075 150,1040 180,1020 220,1018"/>
<polyline class="rb2" points="0,1070 45,1075 84,1083 104,1050 123,1010 143,995 163,952 182,985 202,1018 221,1018"/>
</g>

<!-- Last panel -->
<g transform="translate(2.5 450) scale(8 .33333)">
<path class="lg" d="M0 1218V1213M1 1218V1185M2 1218V1172M3 1218V1152M4 1218V1152M5 1218V1152M6 1218V1150M7 1218V1128M8 1218V1125M9 1218V1125M10 1218V1127M11 1218V1128M12 1218V1125M13 1218V1120M14 1218V1118M15 1218V1130M16 1218V1158M17 1218V1172M18 1218V1182M19 1218V1168M20 1218V1148M21 1218V1130M22 1218V1130M23 1218V1145M24 1218V1152M25 1218V1158M26 1218V1170M27 1218V1200M35 1218V1212M36 1218V1185M37 1218V1160M38 1218V1140M39 1218V1128M40 1218V1140M41 1218V1150M42 1218V1175M43 1218V1195M58 1218V1205M59 1218V1190M60 1218V1198M61 1218V1210M63 1218V1210M64 1218V1183M65 1218V1180M66 1218V1188M67 1218V1200M68 1218V1205M69 1218V1200M70 1218V1197M71 1218V1190M72 1218V1173M73 1218V1170M74 1218V1188M75 1218V1212M84 1218V1205M85 1218V1172M86 1218V1152M87 1218V1128M88 1218V1128M89 1218V1133M90 1218V1143M91 1218V1152M92 1218V1165M93 1218V1180M94 1218V1195M95 1218V1197M96 1218V1200M97 1218V1216M99 1218V1207M100 1218V1180M101 1218V1177M102 1218V1192M103 1218V1194M104 1218V1210M105 1218V1216M108 1218V1213M109 1218V1195M110 1218V1162M111 1218V1137M112 1218V1113M113 1218V1128M114 1218V1143M115 1218V1158M116 1218V1180M117 1218V1207M124 1218V1207M125 1218V1163M126 1218V1132M127 1218V1125M128 1218V1137M129 1218V1155M130 1218V1160M131 1218V1155M132 1218V1155M133 1218V1155M134 1218V1162M135 1218V1182M136 1218V1197M137 1218V1210M141 1218V1212M142 1218V1197M143 1218V1173M144 1218V1188M145 1218V1197M146 1218V1200M147 1218V1212M157 1218V1216M160 1218V1212M161 1218V1183M162 1218V1158M163 1218V1158M164 1218V1197"/>
<path class="lr" d="M28 1218V1232M29 1218V1245M30 1218V1238M31 1218V1230M32 1218V1238M33 1218V1245M34 1218V1235M44 1218V1228M45 1218V1260M46 1218V1292M47 1218V1300M48 1218V1292M49 1218V1292M50 1218V1297M51 1218V1312M52 1218V1330M53 1218V1332M54 1218V1312M55 1218V1290M56 1218V1260M57 1218V1232M62 1218V1222M76 1218V1240M77 1218V1240M78 1218V1220M79 1218V1245M80 1218V1275M81 1218V1290M82 1218V1228M83 1218V1235M106 1218V1222M107 1218V1227M118 1218V1235M119 1218V1270M120 1218V1275M121 1218V1275M122 1218V1270M123 1218V1248M138 1218V1221M139 1218V1221M140 1218V1230M148 1218V1235M149 1218V1260M150 1218V1270M151 1218V1270M152 1218V1270M153 1218V1270M154 1218V1250M155 1218V1233M156 1218V1230M158 1218V1220M159 1218V1220M165 1218V1238M166 1218V1268M167 1218V1265M168 1218V1240"/>
</g>
<g transform="translate(0 450) scale(.40816 .33333)">
<polyline class="cyt" points="0,1113 250,1110 500,1112 700,1130 770,1140 880,1110 1030,1120 1100,1150 1180,1200 1240,1215 1400,1225 1568,1212"/>
<polyline class="cyt" points="0,1135 250,1120 500,1125 700,1150 800,1165 880,1135 1000,1140 1080,1190 1160,1232 1300,1238 1476,1245 1568,1225"/>
<polyline class="gd3" points="0,1128 160,1112 250,1112 340,1115 370,1130 390,1132 420,1115 460,1122 480,1112 530,1125 600,1137 700,1150 720,1160 770,1160 790,1135 830,1112 880,1108 900,1130 950,1135 1000,1140 1040,1180 1100,1210 1140,1222 1190,1218 1220,1235 1300,1237 1390,1240 1420,1225 1450,1205 1476,1215 1568,1222"/>
<polyline class="mg3" points="0,1120 150,1115 340,1115 400,1125 500,1120 600,1130 720,1150 780,1152 830,1130 880,1115 920,1125 1000,1135 1060,1170 1140,1220 1240,1225 1300,1235 1400,1235 1476,1218 1568,1222"/>
<polyline class="cy" points="0,1125 250,1115 370,1118 500,1120 700,1140 770,1155 830,1140 880,1118 1000,1135 1100,1200 1170,1222 1300,1232 1400,1230 1476,1222 1568,1215"/>
</g>
<g transform="translate(640 450) scale(.40816 .33333)">
<polyline class="cyt" points="0,1218 90,1220 160,1260 240,1255 330,1235 400,1235 480,1258 560,1267 620,1275 680,1295 790,1275 900,1310 1020,1300 1120,1265 1280,1275 1420,1265 1529,1295"/>
<polyline class="cyt" points="0,1240 60,1265 130,1285 300,1262 420,1265 530,1280 620,1312 790,1295 900,1325 1060,1312 1120,1290 1170,1268 1300,1278 1400,1280 1480,1320 1529,1330"/>
<polyline class="gd3" points="0,1228 65,1275 120,1272 160,1265 320,1240 370,1275 400,1265 520,1275 575,1310 640,1305 740,1275 790,1290 880,1322 930,1305 1020,1300 1064,1270 1120,1262 1180,1275 1340,1270 1400,1285 1440,1310 1490,1328 1529,1328"/>
<polyline class="mg3" points="0,1230 65,1265 130,1272 260,1255 340,1245 420,1265 520,1275 610,1305 740,1282 800,1285 900,1318 1000,1305 1100,1275 1170,1265 1280,1277 1380,1275 1480,1315 1529,1322"/>
<polyline class="cy" points="0,1225 70,1260 130,1278 300,1250 400,1262 520,1272 620,1300 760,1285 900,1315 1020,1300 1150,1268 1300,1275 1420,1278 1529,1315"/>
</g>
<g transform="translate(1256 450) scale(.40816 .33333)">
<polyline class="cyt" points="0,1287 60,1310 100,1320 163,1283 220,1285"/>
<polyline class="cyt" points="0,1310 60,1322 123,1335 163,1335 220,1305"/>
<polyline class="gd3" points="0,1325 95,1322 123,1295 163,1283 202,1303 221,1305"/>
<polyline class="mg3" points="0,1322 100,1325 163,1290 221,1303"/>
<polyline class="cy" points="0,1325 100,1322 163,1297 221,1300"/>
</g>

<!-- panel frames -->
<g fill="#fff">
<rect x="0" y="452" width="1896" height="1"/>
<rect x="0" y="454" width="1853" height="1"/>
<rect x="0" y="608" width="1853" height="1"/>
<rect x="0" y="610" width="1853" height="1"/>
<rect x="0" y="761" width="1853" height="1"/>
<rect x="0" y="763" width="1853" height="1"/>
<rect x="0" y="815" width="1853" height="1"/>
<rect x="0" y="817" width="1853" height="1"/>
<rect x="0" y="897" width="1853" height="1"/>
<rect x="1852" y="0" width="1" height="898"/>
<rect x="1853" y="20" width="3" height="1"/><rect x="1853" y="53" width="3" height="1"/><rect x="1853" y="86" width="3" height="1"/><rect x="1853" y="119" width="3" height="1"/><rect x="1853" y="185" width="3" height="1"/><rect x="1853" y="218" width="3" height="1"/><rect x="1853" y="251" width="3" height="1"/><rect x="1853" y="284" width="3" height="1"/><rect x="1853" y="317" width="3" height="1"/><rect x="1853" y="350" width="3" height="1"/><rect x="1853" y="383" width="3" height="1"/><rect x="1853" y="416" width="3" height="1"/><rect x="1853" y="449" width="3" height="1"/>
<rect x="58" y="897" width="1" height="4"/><rect x="122" y="897" width="1" height="4"/><rect x="186" y="897" width="1" height="4"/><rect x="250" y="897" width="1" height="4"/><rect x="314" y="897" width="1" height="4"/><rect x="378" y="897" width="1" height="4"/><rect x="442" y="897" width="1" height="4"/><rect x="506" y="897" width="1" height="4"/><rect x="570" y="897" width="1" height="4"/><rect x="634" y="897" width="1" height="4"/><rect x="698" y="897" width="1" height="4"/><rect x="762" y="897" width="1" height="4"/><rect x="826" y="897" width="1" height="4"/><rect x="890" y="897" width="1" height="4"/><rect x="954" y="897" width="1" height="4"/><rect x="1018" y="897" width="1" height="4"/><rect x="1082" y="897" width="1" height="4"/><rect x="1146" y="897" width="1" height="4"/><rect x="1210" y="897" width="1" height="4"/><rect x="1274" y="897" width="1" height="4"/><rect x="1338" y="897" width="1" height="4"/>
</g>

<!-- title -->
<polygon points="0,4 4,4 0,8" fill="#fff"/>
<text x="9" y="10" class="lb" style="fill:#fff">GOLD,H4</text>

<!-- wave numbers -->
<text class="num" x="883" y="281">1</text>
<text class="num" x="906.5" y="347.5">2</text>
<text class="num" x="938.5" y="206">3</text>
<text class="num" x="994.5" y="347.5">4</text>
<text class="num" x="1378.5" y="55">5</text>

<!-- yellow label -->
<rect x="1397.5" y="58.5" width="41" height="11" fill="#000" stroke="#ff0"/>
<text x="1399" y="68" class="ax" style="fill:#ff0">1305.20</text>

<!-- fibo labels -->
<text class="fb" x="1433" y="134">0 1280.34</text>
<text class="fb" x="1433" y="162">13.8 1270.81</text>
<text class="fb" x="1433" y="182">23.6 1264.04</text>
<text class="fb" x="1433" y="212">38.2 1253.95</text>
<text class="fb" x="1433" y="236">50.0 1245.80</text>
<text class="fb" x="1433" y="260">61.8 1237.65</text>
<text class="fb" x="1433" y="294">78.6 1226.05</text>
<text class="fb" x="1433" y="314">88.6 1219.14</text>
<text class="fb" x="1433" y="337">100 1211.27</text>
<text class="fb" x="1433" y="393">127.2 1192.48</text>
<text class="fb" x="1433" y="415">138.2 1184.89</text>

<!-- pivot labels -->
<g class="pv">
<text class="pv" x="1725.5" y="33" textLength="96" lengthAdjust="spacingAndGlyphs" fill="#0000e0">R3 = 1320.92</text>
<text class="pv" x="1725.5" y="53" textLength="96" lengthAdjust="spacingAndGlyphs" fill="#696969">M5 = 1309.01</text>
<text class="pv" x="1725.5" y="73" textLength="96" lengthAdjust="spacingAndGlyphs" fill="#0000e0">R2 = 1297.10</text>
<text class="pv" x="1725.5" y="93" textLength="96" lengthAdjust="spacingAndGlyphs" fill="#696969">M4 = 1290.84</text>
<text class="pv" x="1725.5" y="113" textLength="96" lengthAdjust="spacingAndGlyphs" fill="#0000e0">R1 = 1284.59</text>
<text class="pv" x="1725.5" y="133" textLength="96" lengthAdjust="spacingAndGlyphs" fill="#696969">M3 = 1272.68</text>
<text class="pv" x="1728" y="153" textLength="94" lengthAdjust="spacingAndGlyphs" fill="#f00" xml:space="preserve">P  = 1260.77</text>
<text class="pv" x="1725.5" y="173" textLength="96" lengthAdjust="spacingAndGlyphs" fill="#696969">M2 = 1254.51</text>
<text class="pv" x="1728" y="193" textLength="93.5" lengthAdjust="spacingAndGlyphs" fill="#0000e0">S1 = 1248.26</text>
<text class="pv" x="1725.5" y="213" textLength="96" lengthAdjust="spacingAndGlyphs" fill="#696969">M1 = 1236.35</text>
<text class="pv" x="1728" y="233" textLength="93.5" lengthAdjust="spacingAndGlyphs" fill="#0000e0">S2 = 1224.44</text>
<text class="pv" x="1725.5" y="253" textLength="96" lengthAdjust="spacingAndGlyphs" fill="#696969">M0 = 1218.18</text>
<text class="pv" x="1728" y="273" textLength="93.5" lengthAdjust="spacingAndGlyphs" fill="#0000e0">S3 = 1211.93</text>
</g>

<!-- right axis -->
<text class="ax" x="1858" y="24">1319.90</text>
<text class="ax" x="1858" y="57">1308.50</text>
<text class="ax" x="1858" y="90">1297.40</text>
<text class="ax" x="1858" y="123">1286.00</text>
<rect x="1854" y="145" width="42" height="11" fill="#666"/>
<text class="ax" x="1858" y="154.5" style="fill:#2a2a2a">1275.36</text>
<rect x="1854" y="169" width="42" height="10" fill="#fff"/>
<text class="ax" x="1858" y="177.5" style="fill:#000">1267.85</text>
<text class="ax" x="1858" y="189">1263.80</text>
<text class="ax" x="1858" y="222">1252.40</text>
<text class="ax" x="1858" y="255">1241.30</text>
<text class="ax" x="1858" y="288">1230.20</text>
<text class="ax" x="1858" y="321">1218.80</text>
<text class="ax" x="1858" y="354">1207.70</text>
<text class="ax" x="1858" y="387">1196.60</text>
<text class="ax" x="1858" y="420">1185.20</text>
<text class="ax" x="1858" y="453">1174.10</text>
<text class="ax" x="1856" y="465.5">100</text>
<text class="ax" x="1856" y="563">32</text>
<text class="ax" x="1856" y="605.5">0</text>
<text class="ax" x="1856" y="621.5">3.9003</text>
<text class="ax" x="1856" y="691">0.00</text>
<text class="ax" x="1856" y="758">-3.7894</text>
<text class="ax" x="1856" y="771">100</text>
<text class="ax" x="1856" y="773.5">88.6</text>
<text class="ax" x="1856" y="781">78.6</text>
<text class="ax" x="1856" y="788">61.8</text>
<text class="ax" x="1856" y="793">50</text>
<text class="ax" x="1856" y="798">38.2</text>
<text class="ax" x="1856" y="805">23.6</text>
<text class="ax" x="1856" y="812">11.4</text>
<text class="ax" x="1856" y="815">0.00</text>
<text class="ax" x="1856" y="827.5">1.146</text>
<text class="ax" x="1856" y="860">0.00</text>
<text class="ax" x="1856" y="894.5">-1.211</text>

<!-- indicator labels -->
<text class="lb" x="-1" y="467">RSI(5) 56.1531</text>
<text class="lb" x="0" y="623">OsMA(5,12,3) -0.7514</text>
<text class="lb" x="-3" y="776">StochRSI 50,5,29 46.54.18</text>
<text class="lb" x="-1" y="830" style="opacity:.75">Fisher_Yur4ik -0.1211</text>

<!-- time axis -->
<text class="ax" x="1" y="910">Feb 2016</text>
<text class="ax" x="57" y="910">3 Feb 13:00</text>
<text class="ax" x="121" y="910">4 Feb 21:00</text>
<text class="ax" x="185" y="910">8 Feb 05:00</text>
<text class="ax" x="249" y="910">9 Feb 13:00</text>
<text class="ax" x="313" y="910">10 Feb 21:00</text>
<text class="ax" x="377" y="910">12 Feb 05:00</text>
<text class="ax" x="441" y="910">15 Feb 13:00</text>
<text class="ax" x="505" y="910">17 Feb 01:00</text>
<text class="ax" x="569" y="910">18 Feb 09:00</text>
<text class="ax" x="633" y="910">19 Feb 17:00</text>
<text class="ax" x="697" y="910">23 Feb 01:00</text>
<text class="ax" x="761" y="910">24 Feb 09:00</text>
<text class="ax" x="825" y="910">25 Feb 17:00</text>
<text class="ax" x="889" y="910">29 Feb 01:00</text>
<text class="ax" x="953" y="910">1 Mar 09:00</text>
<text class="ax" x="1017" y="910">2 Mar 17:00</text>
<text class="ax" x="1081" y="910">4 Mar 01:00</text>
<text class="ax" x="1145" y="910">7 Mar 09:00</text>
<text class="ax" x="1209" y="910">8 Mar 17:00</text>
<text class="ax" x="1273" y="910">10 Mar 01:00</text>
<text class="ax" x="1337" y="910">11 Mar 09:00</text>
</svg>
</body></html>
